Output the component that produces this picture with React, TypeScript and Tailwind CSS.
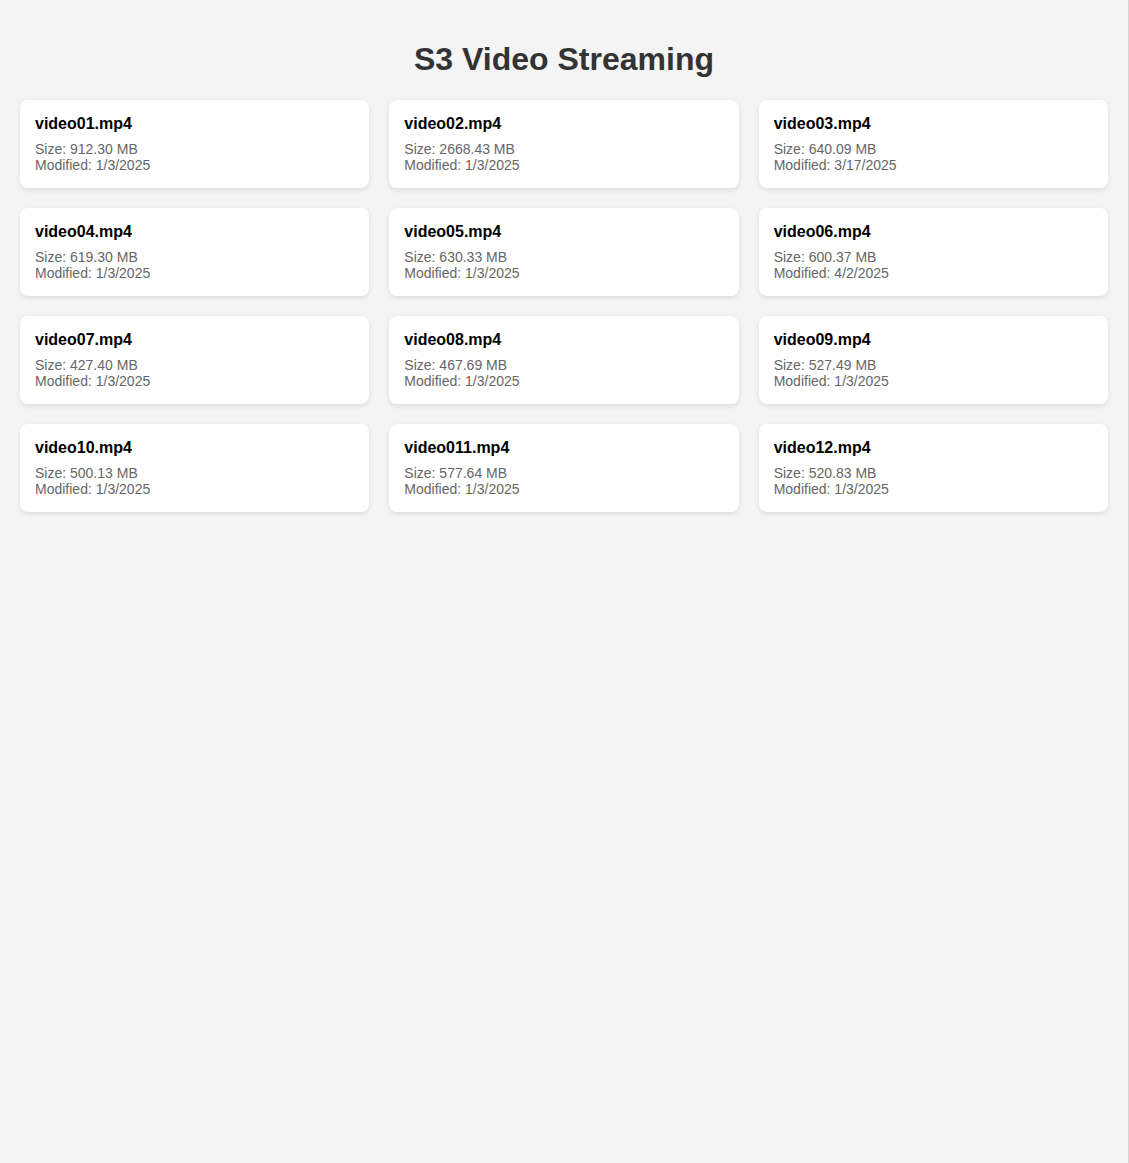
const videos = [
  { name: "video01.mp4", size: "912.30", modified: "1/3/2025" },
  { name: "video02.mp4", size: "2668.43", modified: "1/3/2025" },
  { name: "video03.mp4", size: "640.09", modified: "3/17/2025" },
  { name: "video04.mp4", size: "619.30", modified: "1/3/2025" },
  { name: "video05.mp4", size: "630.33", modified: "1/3/2025" },
  { name: "video06.mp4", size: "600.37", modified: "4/2/2025" },
  { name: "video07.mp4", size: "427.40", modified: "1/3/2025" },
  { name: "video08.mp4", size: "467.69", modified: "1/3/2025" },
  { name: "video09.mp4", size: "527.49", modified: "1/3/2025" },
  { name: "video10.mp4", size: "500.13", modified: "1/3/2025" },
  { name: "video011.mp4", size: "577.64", modified: "1/3/2025" },
  { name: "video12.mp4", size: "520.83", modified: "1/3/2025" },
]

export default function App() {
  return (
    <div className="min-h-screen w-[1129px] bg-[#f4f4f4] border-r border-[#d4d4d4] p-5 font-['Liberation_Sans',Arial,sans-serif]">
      <h1 className="my-[21.44px] text-center text-[32px] font-bold leading-[1.15] text-[#333]">
        S3 Video Streaming
      </h1>

      {/* Lista plików */}
      <div className="grid grid-cols-3 gap-5">
        {videos.map((v) => (
          <div
            key={v.name}
            className="rounded-lg bg-white p-[15px] shadow-[0_2px_5px_rgba(0,0,0,0.1)] cursor-pointer"
          >
            <h3 className="mb-2 text-base font-bold leading-[18px] text-black">{v.name}</h3>
            <p className="text-sm leading-4 text-[#666]">Size: {v.size} MB</p>
            <p className="text-sm leading-4 text-[#666]">Modified: {v.modified}</p>
          </div>
        ))}
      </div>
    </div>
  )
}
